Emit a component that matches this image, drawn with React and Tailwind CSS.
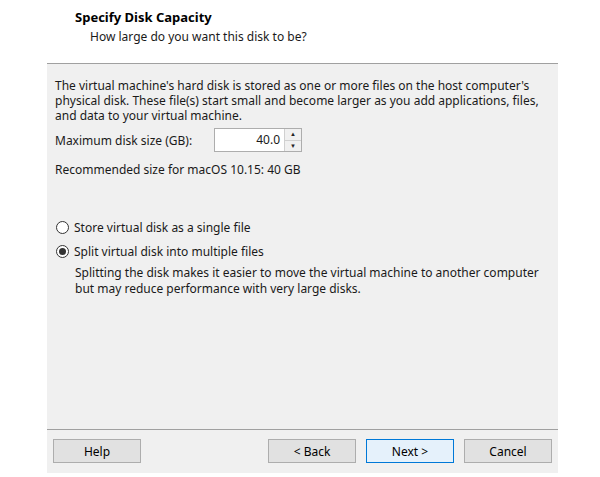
const Radio = ({ checked }) => (
    <span className="w-[13px] h-[13px] rounded-full border border-[#333] bg-white flex items-center justify-center shrink-0">
        {checked && <span className="w-[7px] h-[7px] rounded-full bg-[#333]" />}
    </span>
);

const Btn = ({ children, primary }) => (
    <button
        className={
            primary
                ? 'w-[88px] h-[24px] border border-[#0078d7] bg-[#e5f1fb] text-[12px] text-black'
                : 'w-[88px] h-[24px] border border-[#adadad] bg-[#e1e1e1] text-[12px] text-black'
        }
    >
        {children}
    </button>
);

export default function App() {
    return (
        <div className="w-[600px] h-[477px] bg-white text-[12px] text-[#1a1a1a] font-['Noto_Sans',sans-serif] leading-[15px]">
            {/* header */}
            <div className="h-[63px] pl-[75px] pt-[10px]">
                <div className="font-bold text-[13px] text-black">Specify Disk Capacity</div>
                <div className="pl-[15px] mt-[4px]">How large do you want this disk to be?</div>
            </div>

            {/* panel */}
            <div className="ml-[47px] w-[511px] h-[410px] bg-[#f0f0f0] border-t border-[#a0a0a0] flex flex-col">
                <div className="flex-1 px-[8px] pt-[14px]">
                    <p>
                        The virtual machine's hard disk is stored as one or more files on the host computer's
                        physical disk. These file(s) start small and become larger as you add applications, files,
                        and data to your virtual machine.
                    </p>
                    <div className="flex items-center mt-[5px]">
                        <span className="w-[159px]">Maximum disk size (GB):</span>
                        <div className="flex h-[24px] w-[88px] border border-[#adadad] bg-white">
                            <span className="flex-1 text-right pr-[4px] leading-[22px]">40.0</span>
                            <div className="w-[17px] flex flex-col border-l border-[#d0d0d0] bg-[#f0f0f0]">
                                <span className="flex-1 flex items-center justify-center text-[6px] leading-none text-[#222]">▲</span>
                                <span className="flex-1 flex items-center justify-center text-[6px] leading-none text-[#222] border-t border-[#d0d0d0]">▼</span>
                            </div>
                        </div>
                    </div>
                    <div className="mt-[10px]">Recommended size for macOS 10.15: 40 GB</div>

                    <div className="mt-[43px] flex items-center gap-[5px] pl-[1px]">
                        <Radio />
                        <span>Store virtual disk as a single file</span>
                    </div>
                    <div className="mt-[9px] flex items-center gap-[5px] pl-[1px]">
                        <Radio checked />
                        <span>Split virtual disk into multiple files</span>
                    </div>
                    <p className="pl-[20px] mt-[6px] leading-[16px]">
                        Splitting the disk makes it easier to move the virtual machine to another computer
                        <br />
                        but may reduce performance with very large disks.
                    </p>
                </div>

                <div className="border-t border-[#a0a0a0] h-[44px] flex items-start pt-[9px] px-[6px]">
                    <Btn>Help</Btn>
                    <div className="flex-1" />
                    <div className="flex gap-[10px]">
                        <Btn>&lt; Back</Btn>
                        <Btn primary>Next &gt;</Btn>
                        <Btn>Cancel</Btn>
                    </div>
                </div>
            </div>
        </div>
    );
}
